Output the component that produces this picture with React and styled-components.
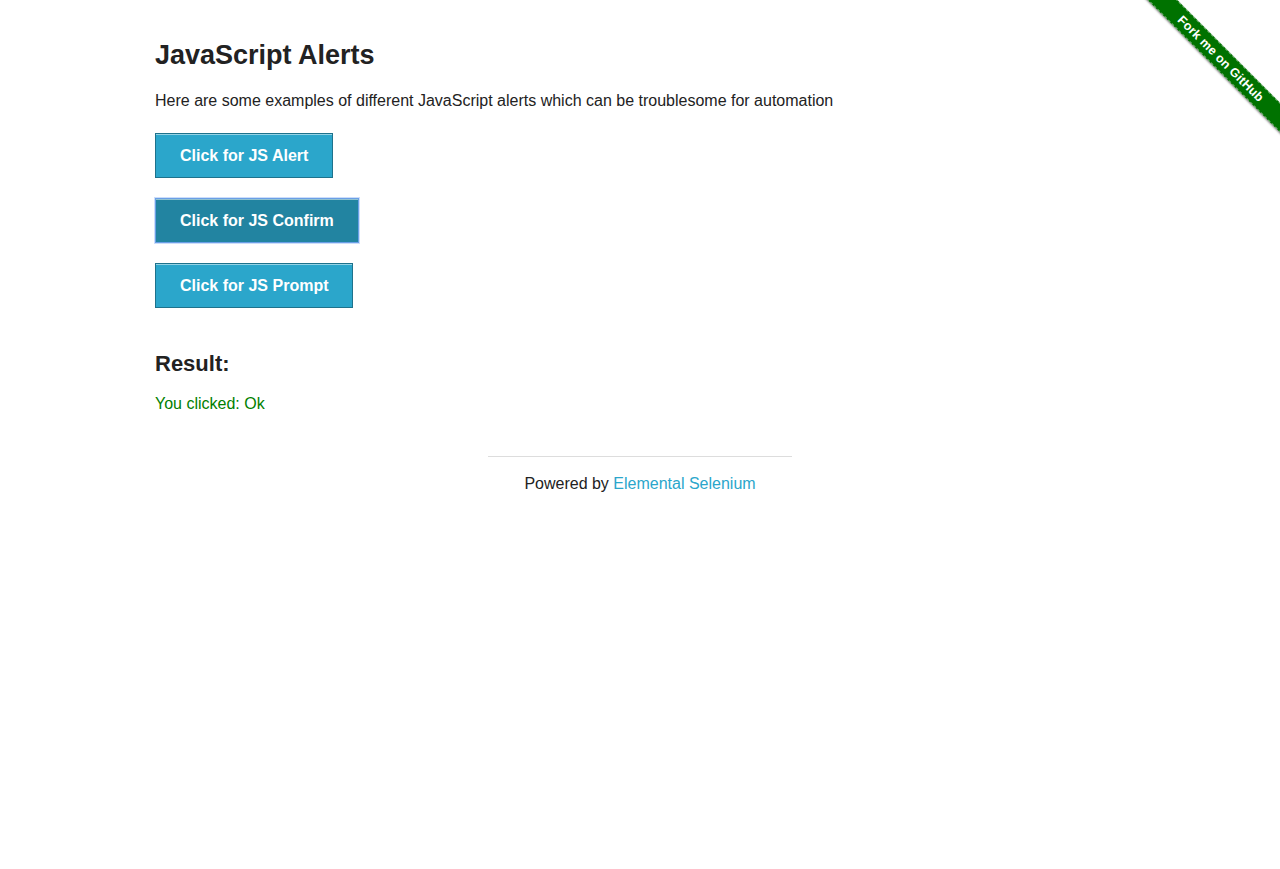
import React from "react";
import styled, { createGlobalStyle } from "styled-components";

const Global = createGlobalStyle`
  html, body { margin: 0; padding: 0; background: #fff; }
  body {
    font-family: "Liberation Sans", Arial, Helvetica, sans-serif;
    color: #222;
    font-size: 16px;
  }
`;

const Page = styled.div`
  position: relative;
  min-height: 869px;
`;

const Container = styled.div`
  width: 970px;
  margin: 0 auto;
  padding-top: 39px;
`;

const Title = styled.h3`
  margin: 0;
  font-size: 27px;
  line-height: 32px;
  font-weight: bold;
  color: #222;
`;

const Intro = styled.p`
  margin: 18px 0 0;
  font-size: 16px;
  line-height: 24px;
`;

const ButtonList = styled.ul`
  list-style: none;
  margin: 20px 0 0;
  padding: 0;
  display: flex;
  flex-direction: column;
  align-items: flex-start;
  gap: 20px;
`;

const Button = styled.button`
  box-sizing: border-box;
  height: 45px;
  padding: 0 24px;
  display: flex;
  align-items: center;
  font-family: "Liberation Sans", Arial, Helvetica, sans-serif;
  font-size: 16px;
  font-weight: bold;
  color: #fff;
  background: ${(p) => (p.$active ? "#2284a1" : "#2ba6cb")};
  border: 1px solid ${(p) => (p.$active ? "#6a9fe6" : "#1e728c")};
  box-shadow: inset 0 1px 0 rgba(255, 255, 255, 0.5)${(p) =>
    p.$active ? ", 0 0 0 1px rgba(110, 160, 240, 0.35)" : ""};
  cursor: pointer;
  outline: none;
`;

const ResultTitle = styled.h4`
  margin: 43px 0 0;
  font-size: 22px;
  line-height: 26px;
  font-weight: bold;
  color: #222;
`;

const ResultText = styled.p`
  margin: 15px 0 0;
  font-size: 16px;
  line-height: 24px;
  color: green;
`;

const Footer = styled.div`
  width: 304px;
  margin: 40px auto 0;
  border-top: 1px solid #ddd;
  padding-top: 15px;
  text-align: center;
  font-size: 16px;
  line-height: 24px;
`;

const Link = styled.a`
  color: #2ba6cb;
  text-decoration: none;
`;

const RibbonWrap = styled.div`
  position: absolute;
  top: 0;
  right: 0;
  width: 149px;
  height: 149px;
  overflow: hidden;
`;

const Ribbon = styled.a`
  position: absolute;
  left: -20px;
  top: 48px;
  width: 220px;
  height: 21px;
  box-sizing: border-box;
  transform: rotate(45deg);
  background: #007200;
  box-shadow: 0 1px 2px rgba(0, 0, 0, 0.45);
  border-top: 1px dashed rgba(255, 255, 255, 0.45);
  border-bottom: 1px dashed rgba(255, 255, 255, 0.45);
  display: flex;
  align-items: center;
  justify-content: center;
  color: #fff;
  font-family: "Liberation Sans", Arial, sans-serif;
  font-weight: bold;
  font-size: 12.5px;
  letter-spacing: 0.2px;
  text-decoration: none;
  white-space: nowrap;
`;

export default function App() {
  return (
    <Page>
      <Global />
      <Container>
        <Title>JavaScript Alerts</Title>
        <Intro>
          Here are some examples of different JavaScript alerts which can be
          troublesome for automation
        </Intro>
        <ButtonList>
          <li>
            <Button>Click for JS Alert</Button>
          </li>
          <li>
            <Button $active>Click for JS Confirm</Button>
          </li>
          <li>
            <Button>Click for JS Prompt</Button>
          </li>
        </ButtonList>
        <ResultTitle>Result:</ResultTitle>
        <ResultText>You clicked: Ok</ResultText>
      </Container>
      <Footer>
        Powered by <Link href="#">Elemental Selenium</Link>
      </Footer>
      <RibbonWrap>
        <Ribbon href="#">Fork me on GitHub</Ribbon>
      </RibbonWrap>
    </Page>
  );
}
